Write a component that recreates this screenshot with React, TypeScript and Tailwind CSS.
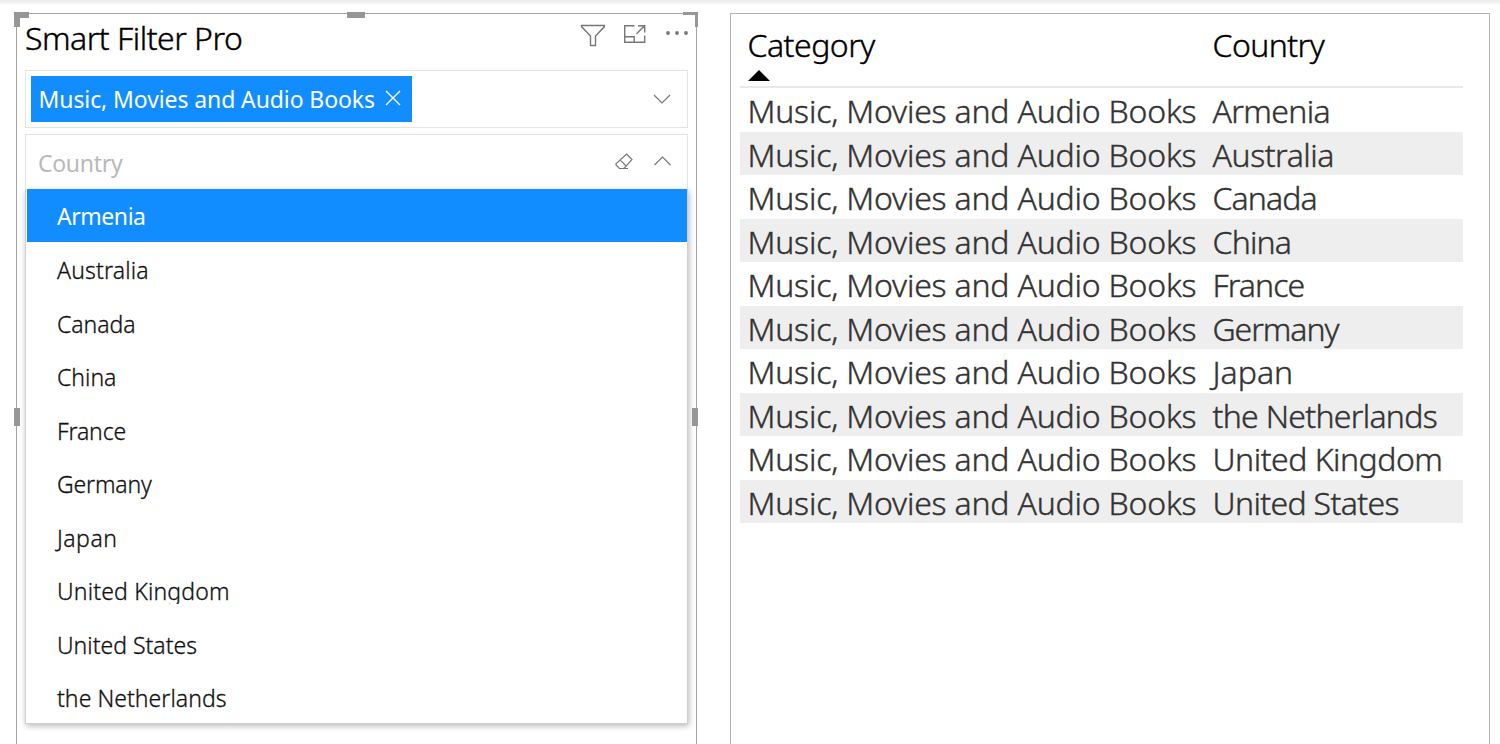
const options = [
  { name: 'Armenia', tracking: 'tracking-[-0.45px]' },
  { name: 'Australia', tracking: 'tracking-[0.15px]' },
  { name: 'Canada', tracking: 'tracking-[-0.05px]' },
  { name: 'China', tracking: 'tracking-[0px]' },
  { name: 'France', tracking: 'tracking-[-0.15px]' },
  { name: 'Germany', tracking: 'tracking-[-0.15px]' },
  { name: 'Japan', tracking: 'tracking-[0.5px]' },
  { name: 'United Kingdom', tracking: 'tracking-[0.18px] [clip-path:inset(0_0_4.5px_0)]' },
  { name: 'United States', tracking: 'tracking-[0px]' },
  { name: 'the Netherlands', tracking: 'tracking-[0.05px]' },
];

const rows = [
  { name: 'Armenia', tracking: 'tracking-[-0.65px]' },
  { name: 'Australia', tracking: 'tracking-[-0.45px]' },
  { name: 'Canada', tracking: 'tracking-[-0.9px]' },
  { name: 'China', tracking: 'tracking-[-0.8px]' },
  { name: 'France', tracking: 'tracking-[-0.9px]' },
  { name: 'Germany', tracking: 'tracking-[-1.05px]' },
  { name: 'Japan', tracking: 'tracking-[0px]' },
  { name: 'the Netherlands', tracking: 'tracking-[-0.7px]' },
  { name: 'United Kingdom', tracking: 'tracking-[-0.5px]' },
  { name: 'United States', tracking: 'tracking-[-0.65px]' },
];

function VisualActions() {
  return (
    <div className="flex pt-[10px] text-[#777]">
      <svg width="26" height="24" viewBox="0 0 26 24" fill="none" stroke="currentColor" strokeWidth="1.4">
        <path d="M1.5 1.5H24.5V2.6L15.5 12V21.5H10.5V12L1.5 2.6Z" />
      </svg>
      <svg className="ml-[17px]" width="24" height="24" viewBox="0 0 24 24" fill="none" stroke="currentColor" strokeWidth="1.4">
        <path d="M11.5 1.7H1.7V18.3H21.7V11.5M1.7 12.7H11.2V18.3M13.5 9.7L21.3 2M15 1.7H21.7V8.5" />
      </svg>
      <svg className="ml-[18px] mr-[-1px]" width="24" height="24" viewBox="0 0 24 24" fill="currentColor">
        <circle cx="3" cy="9" r="1.9" />
        <circle cx="12" cy="9" r="1.9" />
        <circle cx="21" cy="9" r="1.9" />
      </svg>
    </div>
  );
}

function Chevron({ up = false }: { up?: boolean }) {
  return (
    <svg width="18" height="10" viewBox="0 0 18 10" fill="none" stroke="#777" strokeWidth="1.2">
      <path d={up ? 'M1.5 9L9.5 1L17.5 9' : 'M1 1L9 9L17 1'} />
    </svg>
  );
}

function Eraser() {
  return (
    <svg width="18" height="17" viewBox="0 0 18 17" fill="none" stroke="#777" strokeWidth="1.2">
      <path d="M11.5 1L17 6.5L9 15.5H4.5L1 12V10.8ZM5.3 7.2L11 13M4.5 15.5H13" />
    </svg>
  );
}

function Handles() {
  return (
    <>
      <div className="absolute left-[-3px] top-[-2px] h-[15px] w-[15px] border-l-[6px] border-t-[6px] border-[#979797]" />
      <div className="absolute left-[330px] top-[-2px] h-[6px] w-[18px] bg-[#979797]" />
      <div className="absolute right-[-2px] top-[-2px] h-[15px] w-[15px] border-r-[3px] border-t-[3px] border-[#979797]" />
      <div className="absolute left-[-3px] top-[394px] h-[18px] w-[6px] bg-[#979797]" />
      <div className="absolute right-[-2px] top-[394px] h-[18px] w-[6px] bg-[#979797]" />
    </>
  );
}

function FilterVisual() {
  return (
    <section className="relative h-[740px] w-[681px] shrink-0 border border-[#a3a3a3] px-2">
      <Handles />
      <header className="flex h-[56px] justify-between">
        <h1 className="pt-[2px] text-[32px] font-light leading-[44px] tracking-[-0.5px] text-black [-webkit-text-stroke:0.4px_currentColor]">
          Smart Filter Pro
        </h1>
        <VisualActions />
      </header>
      <div className="flex h-[58px] w-[663px] items-center justify-between border border-[#e4e4e4] pl-[5px] pr-[16px]">
        <div className="flex h-[46px] w-[381px] items-center justify-between bg-[#118dff] pl-[7.5px] pr-[11px] text-white">
          <span className="whitespace-nowrap text-[23px] tracking-[-0.1px]">Music, Movies and Audio Books</span>
          <svg className="mb-[2px]" width="16" height="16" viewBox="0 0 16 16" stroke="currentColor" strokeWidth="1.4">
            <path d="M1 1L15 15M15 1L1 15" />
          </svg>
        </div>
        <Chevron />
      </div>
      <div className="mt-[6px] w-[663px]">
        <div className="flex h-[55px] items-center border border-b-0 border-[#e4e4e4] pb-[2px] pl-3 pr-[16px]">
          <span className="flex-1 pt-[4px] text-[23px] tracking-[-0.3px] text-[#b9b9b9]">Country</span>
          <Eraser />
          <span className="ml-[20px]">
            <Chevron up />
          </span>
        </div>
        <ul className="h-[535px] border border-t-0 border-[#d0d0d0] bg-white pl-px shadow-[1px_2px_6px_rgba(0,0,0,0.28)]">
          {options.map(({ name, tracking }, index) => (
            <li
              key={name}
              className={`flex items-center pl-[30px] text-[23px] ${index === 0 ? 'h-[53px] bg-[#118dff] text-white' : 'h-[53.5px] font-light text-[#111] [-webkit-text-stroke:0.3px_currentColor]'}`}
            >
              <span className={`${index === 0 ? 'pt-[1px]' : 'pt-[3px]'} ${tracking}`}>{name}</span>
            </li>
          ))}
        </ul>
      </div>
    </section>
  );
}

function TableVisual() {
  return (
    <section className="ml-[33px] h-[740px] w-[760px] shrink-0 border border-[#b3b3b3] pl-[9px] text-[32px] font-light leading-[43px] [-webkit-text-stroke:0.4px_currentColor]">
      <div className="grid h-[74px] w-[723px] grid-cols-[465px_1fr] border-b-2 border-[#e9e9e9] pl-[7.5px] pt-[9px] text-black">
        <div>
          <div className="tracking-[-0.5px]">Category</div>
          <svg className="mt-[4px]" width="22" height="11" viewBox="0 0 22 11">
            <path d="M0 11L11 0L22 11Z" />
          </svg>
        </div>
        <div className="tracking-[-0.55px]">Country</div>
      </div>
      {rows.map(({ name, tracking }, index) => (
        <div
          key={name}
          className={`grid h-[43.5px] w-[723px] grid-cols-[465px_1fr] whitespace-nowrap pl-[7.5px] pt-[1px] text-[#333] ${index % 2 ? 'bg-[#eee]' : ''}`}
        >
          <span className="tracking-[-0.2px]">Music, Movies and Audio Books</span>
          <span className={tracking}>{name}</span>
        </div>
      ))}
    </section>
  );
}

export default function App() {
  return (
    <main className="h-[744px] w-[1500px] overflow-hidden bg-white font-['Noto_Sans',sans-serif]">
      <div className="h-[13px] bg-[linear-gradient(#ececec,#f4f4f4_3px,#fff_5px)]" />
      <div className="flex pl-4">
        <FilterVisual />
        <TableVisual />
      </div>
    </main>
  );
}
